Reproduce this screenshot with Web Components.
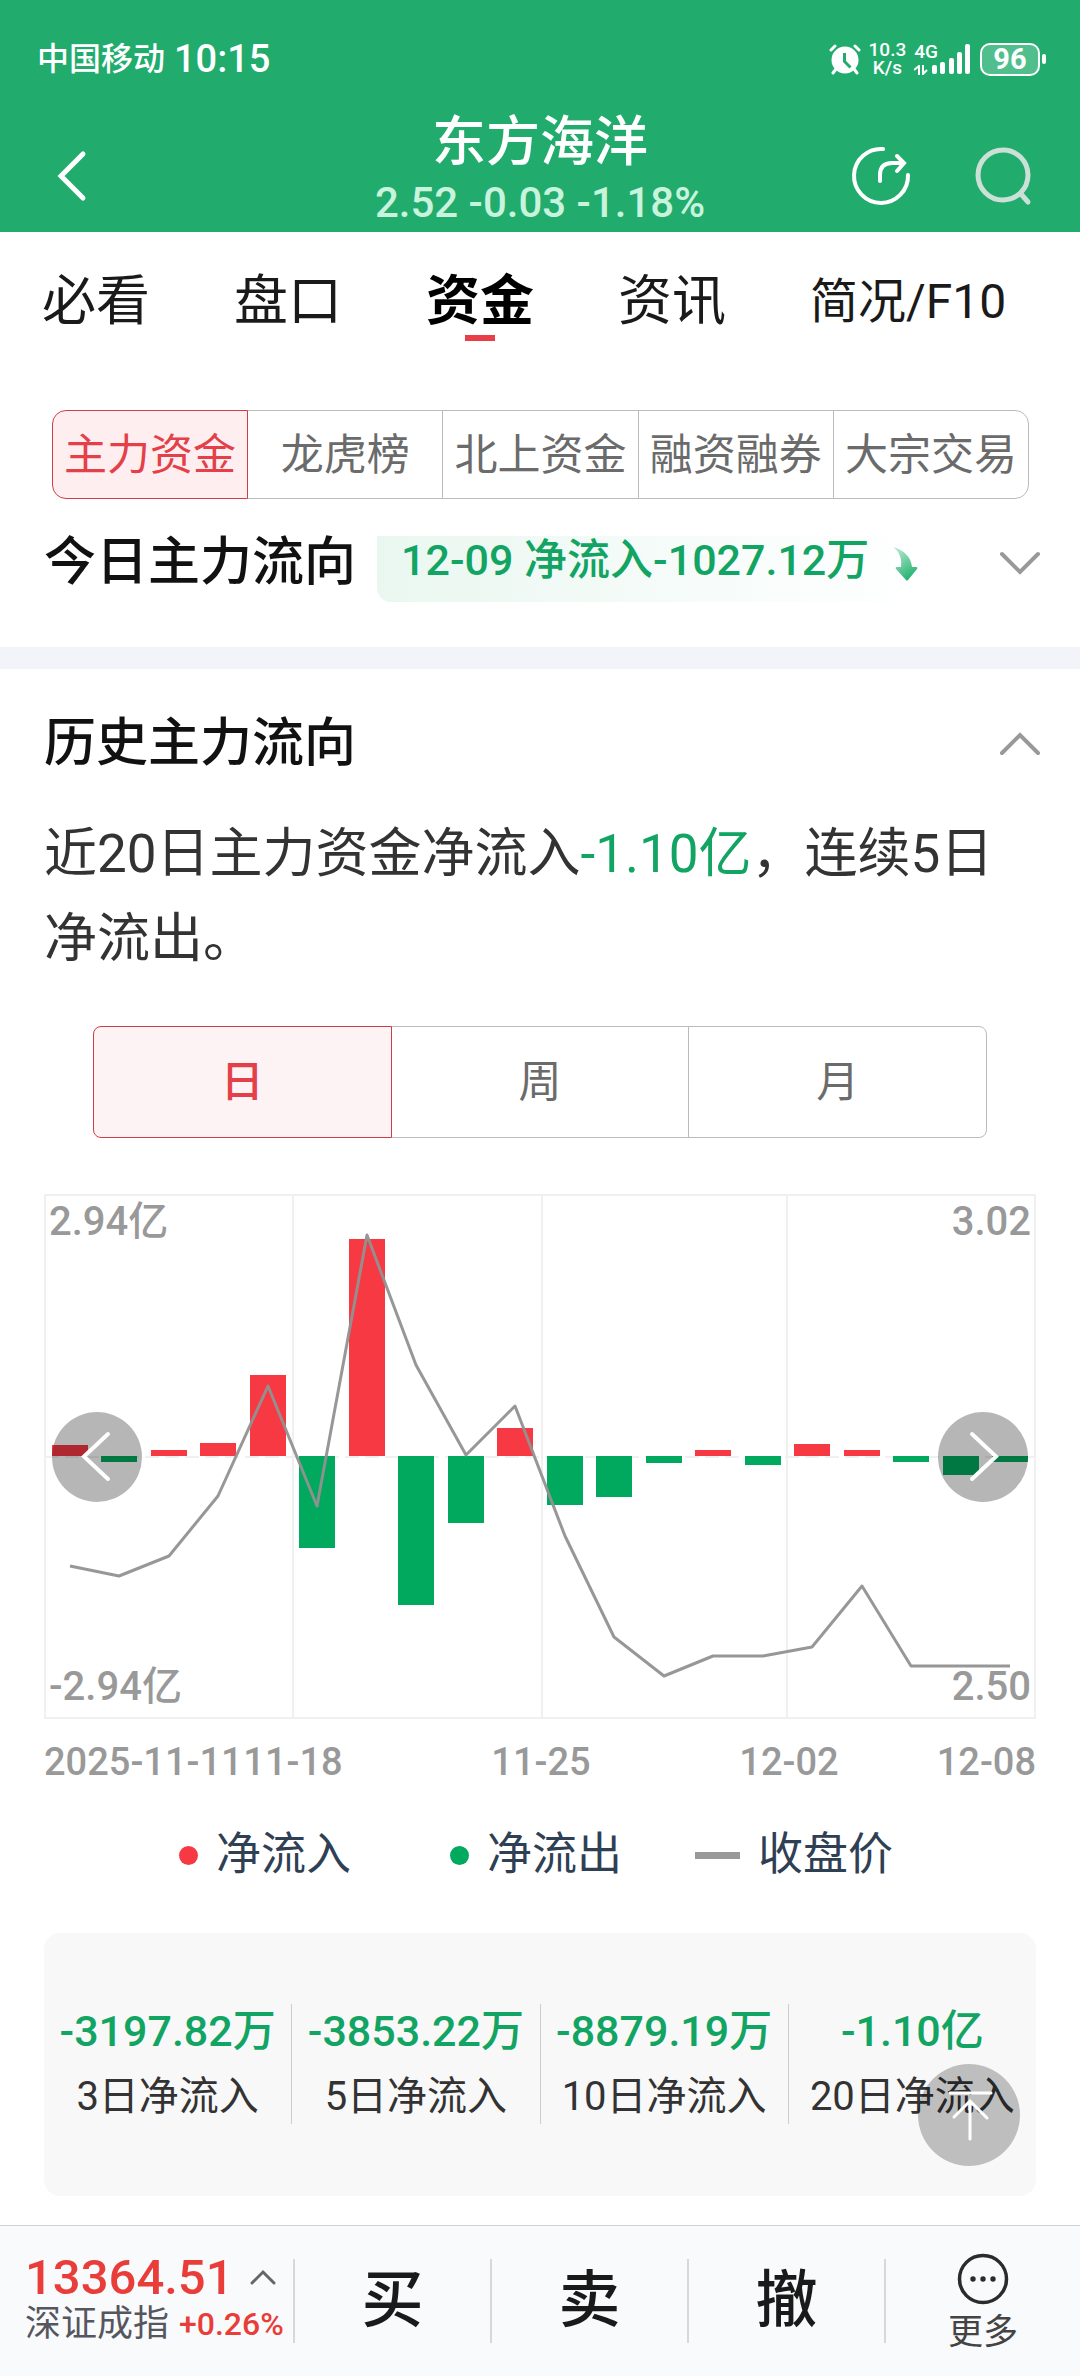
<!DOCTYPE html>
<html lang="zh-CN">
<head>
<meta charset="UTF-8">
<meta name="viewport" content="width=device-width, initial-scale=1">
<title>东方海洋 - 资金</title>
<style>
  :root {
    --green: #00a95d;
    --green-text: #12a462;
    --header: #21ac6e;
    --red: #f73943;
    --red-text: #e4404a;
    --gray: #999999;
    --line: #cccccc;
  }

  body {
    margin: 0;
    background: #ffffff;
    color: #333333;
    font-family: Roboto, "Noto Sans CJK SC", sans-serif;
  }
</style>
</head>
<body>
<stock-page>
  <stock-header slot="header" nome="东方海洋" cotacao="2.52 -0.03 -1.18%"></stock-header>

  <tab-nav>
    <a href="#bikan">必看</a>
    <a href="#pankou">盘口</a>
    <a href="#zijin" aria-current="page">资金</a>
    <a href="#zixun">资讯</a>
    <a href="#f10" class="small">简况/F10</a>
  </tab-nav>

  <segment-control class="types" options="主力资金,龙虎榜,北上资金,融资融券,大宗交易"></segment-control>

  <flow-section class="today" titulo="今日主力流向" icon="down">
    <flow-badge slot="extra">12-09 净流入-1027.12万</flow-badge>
  </flow-section>

  <flow-section class="history" titulo="历史主力流向" icon="up">
    <flow-summary>近20日主力资金净流入<em>-1.10亿</em>，连续5日净流出。</flow-summary>
    <segment-control class="period" options="日,周,月"></segment-control>
    <fund-chart></fund-chart>
    <chart-legend></chart-legend>
    <stat-card>
      <stat-item valor="-3197.82万">3日净流入</stat-item>
      <stat-item valor="-3853.22万">5日净流入</stat-item>
      <stat-item valor="-8879.19万">10日净流入</stat-item>
      <stat-item valor="-1.10亿">20日净流入</stat-item>
    </stat-card>
  </flow-section>

  <back-top slot="footer"></back-top>
  <trade-bar slot="footer"></trade-bar>
</stock-page>

<script>
function createTemplate(html) {
  const template = document.createElement("template");
  template.innerHTML = html;
  return template;
}

class BaseElement extends HTMLElement {
  constructor() {
    super();
    const shadowRoot = this.attachShadow({ mode: "open" });
    shadowRoot.appendChild(this.constructor.template.content.cloneNode(true));
  }
}

/* page */
class StockPage extends BaseElement {
  static template = createTemplate(`
<style>
  :host {
    display: flex;
    flex-direction: column;
    min-height: 100vh;
  }

  main {
    flex: 1;
  }

  ::slotted(.types) {
    margin: 69px 51px 0 52px;
    --radius: 14px;
    --height: 89px;
    --selected: #feeeef;
  }

  ::slotted(.today) {
    padding: 37px 0 45px;
    border-bottom: 22px solid #f2f4f9;
  }

  ::slotted(.history) {
    padding: 48px 0 29px;
  }
</style>
<slot name="header"></slot>
<main><slot></slot></main>
<slot name="footer"></slot>
`);
}

/* phone status bar */
class StatusBar extends BaseElement {
  static template = createTemplate(`
<style>
  :host {
    display: flex;
    align-items: center;
    justify-content: space-between;
    height: 38px;
    padding: 0 34px 0 37px;
    color: #ffffff;
    font-weight: 500;
    line-height: 38px;
  }

  div {
    display: flex;
    align-items: center;
  }

  .carrier {
    font-size: 32px;
    margin-right: 9px;
  }

  .time {
    font-size: 38px;
  }

  .speed,
  .net {
    display: flex;
    flex-direction: column;
    align-items: center;
    font-size: 19px;
    line-height: 18px;
  }

  .speed {
    margin: 0 8px;
  }

  .net {
    align-items: flex-start;
    margin-right: -6px;
  }

  .net svg {
    margin-top: 4px;
  }

  .battery {
    box-sizing: border-box;
    justify-content: center;
    width: 60px;
    height: 33px;
    margin: 0 2px 0 9px;
    border: 2px solid #ffffff;
    border-radius: 10px;
    background: rgba(255, 255, 255, 0.22);
    font-size: 29px;
    font-weight: 700;
  }

  .nub {
    width: 4px;
    height: 10px;
    border-radius: 2px;
    background: #ffffff;
  }
</style>
<div>
  <span class="carrier">中国移动</span>
  <span class="time">10:15</span>
</div>
<div>
  <svg width="32" height="31" viewBox="0 0 32 31" fill="none" stroke="#fff" stroke-width="3" stroke-linecap="round">
    <circle cx="16" cy="16" r="13.5" fill="#fff" stroke="none"/>
    <path d="M2 6l4-4M30 6l-4-4M7 25l-3 4M25 25l3 4"/>
    <path d="M15.500 9v8.500l6 6" stroke="#21ac6e" stroke-linecap="butt"/>
  </svg>
  <span class="speed"><span>10.3</span><span>K/s</span></span>
  <span class="net">
    <span>4G</span>
    <svg width="14" height="10" viewBox="0 0 14 10" fill="none" stroke="#fff" stroke-width="2">
      <path d="M0 5l5-4v9M9 0v9l4-4"/>
    </svg>
  </span>
  <svg width="39" height="31" viewBox="0 0 39 31" fill="#fff">
    <rect x="0" y="21" width="5" height="9" rx="2"/>
    <rect x="8" y="18" width="5" height="12" rx="2"/>
    <rect x="17" y="14" width="5" height="16" rx="2"/>
    <rect x="25" y="8" width="5" height="22" rx="2"/>
    <rect x="33" y="0" width="5" height="30" rx="2"/>
  </svg>
  <div class="battery">96</div>
  <span class="nub"></span>
</div>
`);
}

/* green header */
class StockHeader extends BaseElement {
  static template = createTemplate(`
<style>
  :host {
    display: block;
    padding-top: 40px;
    background: var(--header);
    color: #ffffff;
    text-align: center;
  }

  nav {
    display: grid;
    grid-template-columns: 1fr auto 1fr;
    align-items: center;
    padding: 34px 41px 0;
  }

  button {
    padding: 0;
    border: 0;
    background: none;
    cursor: pointer;
  }

  svg {
    display: block;
  }

  .back {
    justify-self: start;
    padding-top: 8px;
  }

  .actions {
    display: flex;
    justify-content: flex-end;
    gap: 50px;
    padding-top: 8px;
  }

  h1 {
    margin: 0;
    font-size: 54px;
    font-weight: 500;
    line-height: 62px;
  }

  p {
    margin: 0;
    color: #c8f3dd;
    font-size: 42px;
    font-weight: 500;
    line-height: 58px;
  }
</style>
<status-bar></status-bar>
<nav>
  <button class="back" aria-label="返回">
    <svg width="72" height="72" viewBox="0 0 72 72" fill="none" stroke="#fff" stroke-width="5" stroke-linecap="round">
      <path d="M42 14L20 36l22 22"/>
    </svg>
  </button>
  <div>
    <h1></h1>
    <p></p>
  </div>
  <div class="actions">
    <button aria-label="分享">
      <svg width="72" height="72" viewBox="0 0 72 72" fill="none" stroke="#fff" stroke-width="4" stroke-linecap="round">
        <path d="M38 9A27 27 0 1 0 63 35"/>
        <path d="M35 41v-6q0-12 12-12h11M52 16l7 7-7 8"/>
      </svg>
    </button>
    <button aria-label="搜索">
      <svg width="72" height="72" viewBox="0 0 72 72" fill="none" stroke="#cbe0d6" stroke-width="5" stroke-linecap="round">
        <circle cx="36" cy="35" r="25"/>
        <path d="M54 54l7 8"/>
      </svg>
    </button>
  </div>
</nav>
`);

  connectedCallback() {
    this.shadowRoot.querySelector("h1").textContent = this.getAttribute("nome");
    this.shadowRoot.querySelector("p").textContent = this.getAttribute("cotacao");
  }
}

/* main tabs */
class TabNav extends BaseElement {
  static template = createTemplate(`
<style>
  :host {
    display: block;
  }

  nav {
    display: flex;
    gap: 84px;
    height: 71px;
    padding: 38px 42px 0;
  }

  ::slotted(a) {
    color: #1a1a1a;
    font-size: 54px;
    line-height: 64px;
    text-decoration: none;
    white-space: nowrap;
  }

  ::slotted(.small) {
    font-size: 48px;
  }

  ::slotted([aria-current]) {
    color: #000000;
    font-weight: 700;
    background: linear-gradient(#e93d49, #e93d49) center 65px / 30px 6px no-repeat;
  }
</style>
<nav><slot></slot></nav>
`);
}

/* joined buttons */
class SegmentControl extends BaseElement {
  static template = createTemplate(`
<style>
  :host {
    display: flex;
  }

  button {
    box-sizing: border-box;
    flex: 1 1 0;
    height: var(--height);
    padding: 0;
    border: 1px solid #bbbbbb;
    background: #ffffff;
    color: #6b6b6b;
    font: inherit;
    font-size: 43px;
    line-height: 52px;
    white-space: nowrap;
    cursor: pointer;
  }

  button + button {
    margin-left: -1px;
  }

  button:first-of-type {
    border-radius: var(--radius) 0 0 var(--radius);
  }

  button:last-of-type {
    border-radius: 0 var(--radius) var(--radius) 0;
  }

  button[aria-pressed="true"] {
    z-index: 1;
    border-color: #cc3f48;
    background: var(--selected);
    color: var(--red-text);
    font-weight: var(--selected-weight, 400);
  }
</style>
`);

  connectedCallback() {
    this.getAttribute("options").split(",").forEach((text, i) => {
      const button = document.createElement("button");
      button.textContent = text;
      button.setAttribute("aria-pressed", i === 0);
      button.addEventListener("click", () => this.select(button));
      this.shadowRoot.appendChild(button);
    });
  }

  select(selected) {
    this.shadowRoot.querySelectorAll("button").forEach((button) => {
      button.setAttribute("aria-pressed", button === selected);
    });
  }
}

/* section with title and collapse button */
class FlowSection extends BaseElement {
  static template = createTemplate(`
<style>
  :host {
    display: block;
  }

  header {
    display: flex;
    align-items: flex-start;
    padding: 0 39px 0 44px;
  }

  h2 {
    margin: 0 21px 0 0;
    color: #111111;
    font-size: 52px;
    font-weight: 500;
    line-height: 54px;
  }

  button {
    height: 54px;
    margin-left: auto;
    padding: 0;
    border: 0;
    background: none;
    cursor: pointer;
  }

  svg {
    display: block;
  }

  :host([icon="up"]) svg {
    transform: rotate(180deg);
  }

  ::slotted(.period) {
    margin: 44px 93px 0;
    --radius: 8px;
    --height: 112px;
    --selected: #fdf2f4;
    --selected-weight: 500;
  }
</style>
<header>
  <h2></h2>
  <slot name="extra"></slot>
  <button aria-label="展开或收起">
    <svg width="42" height="54" viewBox="0 0 42 54" fill="none" stroke="#999" stroke-width="4" stroke-linecap="round">
      <path d="M3 18l18 18 18-18"/>
    </svg>
  </button>
</header>
<slot></slot>
`);

  connectedCallback() {
    this.shadowRoot.querySelector("h2").textContent = this.getAttribute("titulo");
  }
}

class FlowBadge extends BaseElement {
  static template = createTemplate(`
<style>
  :host {
    display: flex;
    box-sizing: border-box;
    height: 66px;
    padding: 0 14px 0 24px;
    border-bottom-left-radius: 14px;
    background: linear-gradient(to right, #eaf7f1, #ffffff);
    color: var(--green-text);
    font-size: 43px;
    font-weight: 500;
    line-height: 48px;
    white-space: nowrap;
  }

  svg {
    margin: 10px 0 0 23px;
  }
</style>
<slot></slot>
<svg width="26" height="36" viewBox="0 0 26 36">
  <defs>
    <linearGradient id="fade" x1="0" y1="0" x2="0.500" y2="1">
      <stop offset="0" stop-color="#c5ecd8"/>
      <stop offset="1" stop-color="#2ab574"/>
    </linearGradient>
  </defs>
  <path d="M1 1C12 4 19 11 20 21h4q2 0 1 2L16 34q-1 1-2 0L4 23q-1-2 1-2h4C10 13 8 6 1 1z" fill="url(#fade)"/>
</svg>
`);
}

class FlowSummary extends BaseElement {
  static template = createTemplate(`
<style>
  :host {
    display: block;
    margin-top: 41px;
    padding: 0 60px 0 44px;
    font-size: 53px;
    line-height: 85px;
  }

  ::slotted(em) {
    color: var(--green-text);
    font-style: normal;
  }
</style>
<slot></slot>
`);
}

/* bars: net flow, line: close price */
class FundChart extends BaseElement {
  static flows = [11, -6, 6, 13, 81, -92, 217, -149, -67, 28, -49, -41, -7, 6, -9, 12, 6, -6, -19, -6];
  static closes = [372, 382, 362, 302, 192, 312, 41, 171, 261, 212, 342, 443, 482, 462, 462, 453, 392, 472, 472, 472];

  static template = createTemplate(`
<style>
  :host {
    display: block;
    position: relative;
    margin: 56px 44px 0;
  }

  svg {
    display: block;
    width: 100%;
  }

  text {
    fill: var(--gray);
    font-size: 38px;
    font-weight: 500;
  }

  .value {
    font-size: 40px;
  }

  .grid {
    fill: none;
    stroke: #f0f0f0;
    stroke-width: 2;
  }

  .up {
    fill: var(--red);
  }

  .down {
    fill: var(--green);
  }

  polyline {
    fill: none;
    stroke: rgba(145, 145, 145, 0.95);
    stroke-width: 3;
    stroke-linejoin: round;
  }

  .end {
    text-anchor: end;
  }

  .middle {
    text-anchor: middle;
  }

  button {
    position: absolute;
    top: 218px;
    width: 90px;
    height: 90px;
    padding: 0;
    border: 0;
    border-radius: 50%;
    background: rgba(0, 0, 0, 0.285);
    cursor: pointer;
  }

  .prev {
    left: 8px;
  }

  .next {
    right: 8px;
    transform: scaleX(-1);
  }

  button svg {
    fill: none;
    stroke: #ffffff;
    stroke-width: 4;
    stroke-linecap: round;
  }
</style>
<svg class="plot" viewBox="0 0 992 596">
  <rect class="grid" x="1" y="1" width="990" height="523"/>
  <path class="grid" d="M249 1v523M498 1v523M743 1v523"/>
  <path class="grid" d="M1 263h990" stroke-dasharray="14 6"/>
  <g class="bars"></g>
  <polyline/>
  <text x="5" y="41" class="value">2.94亿</text>
  <text x="5" y="506" class="value">-2.94亿</text>
  <text x="987" y="41" class="value end">3.02</text>
  <text x="987" y="506" class="value end">2.50</text>
  <text x="0" y="581">2025-11-11</text>
  <text x="249" y="581" class="middle">11-18</text>
  <text x="497" y="581" class="middle">11-25</text>
  <text x="745" y="581" class="middle">12-02</text>
  <text x="992" y="581" class="end">12-08</text>
</svg>
<button class="prev" aria-label="上一页"><svg viewBox="0 0 90 90"><path d="M56 22L32 44.500 56 67"/></svg></button>
<button class="next" aria-label="下一页"><svg viewBox="0 0 90 90"><path d="M56 22L32 44.500 56 67"/></svg></button>
`);

  connectedCallback() {
    const { flows, closes } = FundChart;
    const zero = 262;
    const center = (i) => 26 + Math.round((940 / 19) * i);

    this.shadowRoot.querySelector(".bars").innerHTML = flows
      .map((flow, i) => {
        const y = flow > 0 ? zero - flow : zero;
        return `<rect class="${flow > 0 ? "up" : "down"}" x="${center(i) - 18}" y="${y}" width="36" height="${Math.abs(flow)}"/>`;
      })
      .join("");

    this.shadowRoot
      .querySelector("polyline")
      .setAttribute("points", closes.map((y, i) => `${center(i)},${y}`).join(" "));
  }
}

class ChartLegend extends BaseElement {
  static template = createTemplate(`
<style>
  :host {
    display: block;
    margin: 35px 44px 0;
    padding-left: 109px;
    color: #2f4054;
    font-size: 45px;
    line-height: 60px;
  }

  ul {
    display: flex;
    gap: 73px;
    margin: 0;
    padding: 0;
    list-style: none;
  }

  li {
    display: flex;
    align-items: center;
    gap: 18px;
  }

  i {
    display: flex;
    justify-content: flex-end;
    width: 45px;
  }

  i::before {
    content: "";
    width: 19px;
    height: 19px;
    border-radius: 50%;
    background: var(--red);
  }

  .out::before {
    background: var(--green);
  }

  .price::before {
    width: 45px;
    height: 7px;
    border-radius: 0;
    background: var(--gray);
  }
</style>
<ul>
  <li><i></i>净流入</li>
  <li><i class="out"></i>净流出</li>
  <li><i class="price"></i>收盘价</li>
</ul>
`);
}

/* totals */
class StatCard extends BaseElement {
  static template = createTemplate(`
<style>
  :host {
    display: flex;
    margin: 48px 44px 0;
    padding: 71px 0 72px;
    border-radius: 16px;
    background: #f8f8f8;
  }

  ::slotted(:not(:last-child)) {
    border-right: 1px solid var(--line);
  }
</style>
<slot></slot>
`);
}

class StatItem extends BaseElement {
  static template = createTemplate(`
<style>
  :host {
    display: block;
    box-sizing: border-box;
    flex: 1 1 0;
    font-size: 40px;
    line-height: 54px;
    text-align: center;
    white-space: nowrap;
  }

  strong {
    display: block;
    margin-bottom: 10px;
    color: var(--green-text);
    font-size: 43px;
    font-weight: 500;
    line-height: 54px;
    padding-bottom: 2px;
  }
</style>
<strong></strong>
<slot></slot>
`);

  connectedCallback() {
    this.shadowRoot.querySelector("strong").textContent = this.getAttribute("valor");
  }
}

/* floating button */
class BackTop extends BaseElement {
  static template = createTemplate(`
<style>
  :host {
    position: fixed;
    right: 60px;
    bottom: 210px;
  }

  button {
    display: block;
    width: 102px;
    height: 102px;
    padding: 0;
    border: 0;
    border-radius: 50%;
    background: rgba(0, 0, 0, 0.23);
    cursor: pointer;
  }
</style>
<button aria-label="回到顶部">
  <svg viewBox="0 0 102 102" fill="none" stroke="#fff" stroke-width="3" stroke-linecap="round">
    <path d="M32 29h41M52 75V37M36 53l16-16 17 17"/>
  </svg>
</button>
`);

  connectedCallback() {
    this.shadowRoot.querySelector("button").addEventListener("click", () => {
      window.scrollTo({ top: 0, behavior: "smooth" });
    });
  }
}

/* bottom bar */
class TradeBar extends BaseElement {
  static template = createTemplate(`
<style>
  :host {
    display: grid;
    grid-template-columns: 295fr 197fr 197fr 197fr 194fr;
    align-items: center;
    box-sizing: border-box;
    height: 151px;
    border-top: 1px solid #d0d2d8;
    background: #f9fafc;
  }

  button {
    box-sizing: border-box;
    height: 84px;
    padding: 0;
    border: 0;
    border-right: 2px solid #d8d8da;
    background: none;
    color: #1a1a1a;
    font: inherit;
    font-size: 62px;
    font-weight: 500;
    line-height: 84px;
    white-space: nowrap;
    cursor: pointer;
  }

  .index {
    display: flex;
    flex-direction: column;
    justify-content: center;
    padding-left: 25px;
    color: #e93d3a;
    font-size: 32px;
    font-weight: 500;
    text-align: left;
  }

  .index span {
    display: flex;
    align-items: center;
    line-height: 46px;
  }

  .index strong {
    margin-right: 16px;
    font-size: 49px;
    font-weight: 500;
  }

  .index b {
    margin-right: 10px;
    color: #55565e;
    font-size: 36px;
    font-weight: 400;
  }

  .more {
    display: flex;
    flex-direction: column;
    align-items: center;
    gap: 6px;
    height: auto;
    padding-top: 6px;
    border: 0;
    color: #444444;
    font-size: 35px;
    font-weight: 400;
    line-height: 44px;
  }
</style>
<button class="index">
  <span>
    <strong>13364.51</strong>
    <svg width="26" height="20" viewBox="0 0 26 20" fill="none" stroke="#666" stroke-width="3" stroke-linecap="round">
      <path d="M2 15L13 4l11 11"/>
    </svg>
  </span>
  <span><b>深证成指</b>+0.26%</span>
</button>
<button>买</button>
<button>卖</button>
<button>撤</button>
<button class="more">
  <svg width="52" height="52" viewBox="0 0 52 52" fill="none" stroke="#2b2b2b" stroke-width="3.500">
    <circle cx="26" cy="26" r="23.500"/>
    <g fill="#2b2b2b" stroke="none">
      <circle cx="16" cy="26" r="2.700"/>
      <circle cx="26" cy="26" r="2.700"/>
      <circle cx="36" cy="26" r="2.700"/>
    </g>
  </svg>
  更多
</button>
`);
}

customElements.define("stock-page", StockPage);
customElements.define("status-bar", StatusBar);
customElements.define("stock-header", StockHeader);
customElements.define("tab-nav", TabNav);
customElements.define("segment-control", SegmentControl);
customElements.define("flow-section", FlowSection);
customElements.define("flow-badge", FlowBadge);
customElements.define("flow-summary", FlowSummary);
customElements.define("fund-chart", FundChart);
customElements.define("chart-legend", ChartLegend);
customElements.define("stat-card", StatCard);
customElements.define("stat-item", StatItem);
customElements.define("back-top", BackTop);
customElements.define("trade-bar", TradeBar);
</script>
</body>
</html>
